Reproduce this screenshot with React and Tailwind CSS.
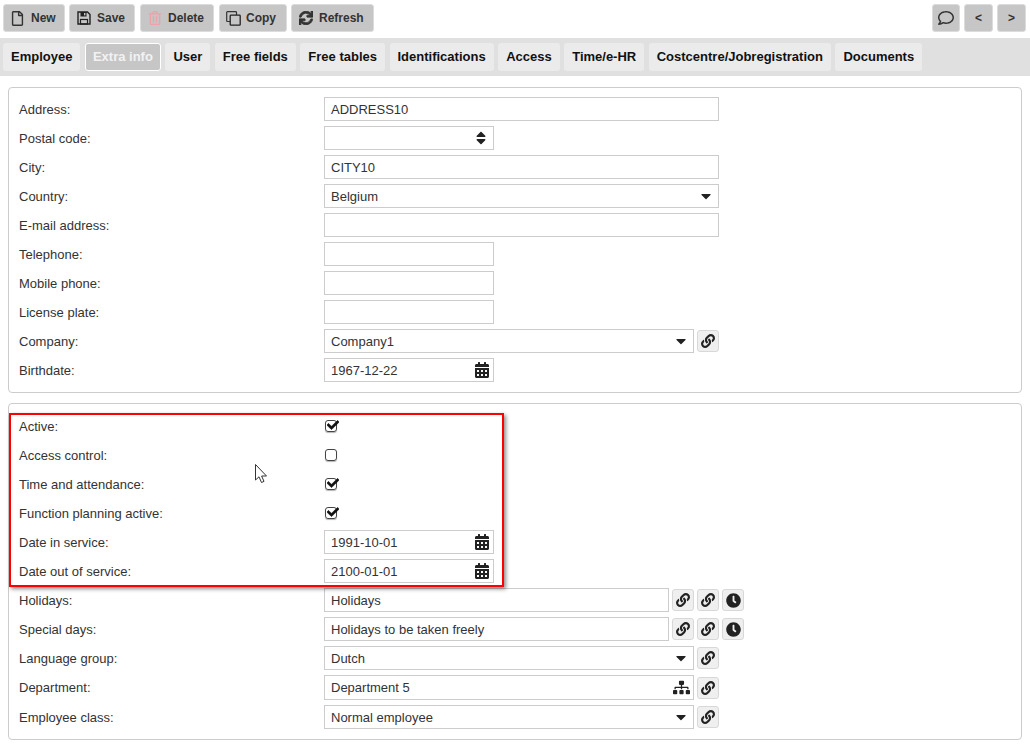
import React from 'react'
import { FaRegFile, FaRegTrashAlt, FaSync, FaRegComment, FaLink, FaClock, FaSitemap, FaCalendarAlt, FaSort, FaCaretDown, FaCheck } from 'react-icons/fa'

const toolbarButton = 'h-7 flex items-center rounded-[3px] border border-[#dcdcdc] bg-[#c6c6c6] text-xs font-bold text-[#333]'
const tabs = ['Employee', 'Extra info', 'User', 'Free fields', 'Free tables', 'Identifications', 'Access', 'Time/e-HR', 'Costcentre/Jobregistration', 'Documents']

const SaveIcon = () => (
  <svg width="14" height="14" viewBox="0 0 14 14" className="shrink-0">
    <path d="M1 1 H10.5 L13 3.5 V13 H1 Z" fill="none" stroke="#222" strokeWidth="1.4" />
    <rect x="3.5" y="1" width="6" height="4.5" fill="#222" />
    <rect x="7" y="2" width="1.4" height="2.4" fill="#c6c6c6" />
    <rect x="3.5" y="8.5" width="7" height="4.5" fill="none" stroke="#222" strokeWidth="1.2" />
  </svg>
)

const CopyIcon = () => (
  <svg width="15" height="15" viewBox="0 0 15 15" className="shrink-0">
    <path d="M4 10.5 H1.5 Q0.7 10.5 0.7 9.7 V1.5 Q0.7 0.7 1.5 0.7 H9.7 Q10.5 0.7 10.5 1.5 V4" fill="none" stroke="#333" strokeWidth="1.2" />
    <rect x="4.2" y="4.2" width="10" height="10" rx="0.8" fill="none" stroke="#222" strokeWidth="1.3" />
  </svg>
)

const Row = ({ label, tall, children }) => (
  <div className={`flex items-center ${tall ? 'h-[25px]' : 'h-6'}`}>
    <label className="w-[305px] shrink-0 text-[#333]">{label}</label>
    {children}
  </div>
)

const Field = ({ width, value, icon, tall }) => (
  <div className={`${width} ${tall ? 'h-[25px]' : 'h-6'} flex items-center justify-between border border-[#ccc] bg-white pl-[6px] pr-[3px] text-[#333]`}>
    <span>{value}</span>
    {icon}
  </div>
)

const IconButton = ({ children }) => (
  <button className="ml-[3px] w-[22px] h-[22px] flex items-center justify-center rounded-[3px] border border-[#d8d8d8] bg-[#efefef] text-[#222] text-[14px]">
    {children}
  </button>
)

const Caret = () => <FaCaretDown className="text-[#222] text-[16px] mr-[1px]" />
const Calendar = () => <FaCalendarAlt className="text-[#222] text-[16px]" />
const LinkButton = () => <IconButton><FaLink /></IconButton>
const ClockButton = () => <IconButton><FaClock className="text-[15px]" /></IconButton>

const Checkbox = ({ checked }) => (
  <div className="relative ml-[1px] w-[12px] h-[12px] rounded-[3px] border border-[#444] shadow-[0_1px_1px_rgba(0,0,0,0.3)]">
    {checked && <FaCheck className="absolute left-[1px] top-[-2px] text-[#111] text-[12px] stroke-[20px]" />}
  </div>
)

const App = () => (
  <div className="relative w-[1030px] h-[752px] overflow-hidden bg-white font-['Liberation_Sans',Arial,sans-serif] text-[13px] leading-none">
    {/* Toolbar */}
    <div className="h-[38px] flex items-start pt-1 pl-[3px] pr-1">
      <button className={`${toolbarButton} w-[62px] pl-[6px] mr-[4px] gap-[6px]`}><FaRegFile className="text-[15px]" />New</button>
      <button className={`${toolbarButton} w-[66px] pl-[7px] mr-[5px] gap-[6px]`}><SaveIcon />Save</button>
      <button className={`${toolbarButton} w-[74px] pl-[7px] mr-[5px] gap-[6px]`}><FaRegTrashAlt className="text-[14px] text-[#f0a0a8]" />Delete</button>
      <button className={`${toolbarButton} w-[68px] pl-[6px] mr-[4px] gap-[5px]`}><CopyIcon />Copy</button>
      <button className={`${toolbarButton} w-[83px] pl-[7px] gap-[6px]`}><FaSync className="text-[14px] stroke-[30px]" />Refresh</button>
      <div className="ml-auto flex gap-[4px]">
        <button className={`${toolbarButton} w-[28px] justify-center`}><FaRegComment className="text-[16px]" /></button>
        <button className={`${toolbarButton} w-[29px] justify-center`}>&lt;</button>
        <button className={`${toolbarButton} w-[29px] justify-center`}>&gt;</button>
      </div>
    </div>

    {/* Tabs */}
    <div className="h-[38px] bg-[#e0e0e0] flex items-center gap-[4.5px] pl-[3px]">
      {tabs.map((tab) => (
        tab === 'Extra info'
          ? <div key={tab} className="h-7 px-[7px] pb-[1px] flex items-center rounded-[3px] border border-white bg-[#c6c6c6] font-bold text-[#f2f2f2]">{tab}</div>
          : <div key={tab} className="h-7 px-2 pb-[1px] flex items-center rounded-[3px] bg-[#ebebeb] font-bold text-[#111]">{tab}</div>
      ))}
    </div>

    {/* Address panel */}
    <div className="mx-2 mt-[11px] h-[306px] rounded-[4px] border border-[#ccc] px-[10px] pt-[9px] flex flex-col gap-[5px]">
      <Row label="Address:"><Field width="w-[395px]" value="ADDRESS10" /></Row>
      <Row label="Postal code:"><Field width="w-[170px]" icon={<FaSort className="text-[#222] text-[16px] mr-[1px]" />} /></Row>
      <Row label="City:"><Field width="w-[395px]" value="CITY10" /></Row>
      <Row label="Country:"><Field width="w-[395px]" value="Belgium" icon={<Caret />} /></Row>
      <Row label="E-mail address:"><Field width="w-[395px]" /></Row>
      <Row label="Telephone:"><Field width="w-[170px]" /></Row>
      <Row label="Mobile phone:"><Field width="w-[170px]" /></Row>
      <Row label="License plate:"><Field width="w-[170px]" /></Row>
      <Row label="Company:"><Field width="w-[370px]" value="Company1" icon={<Caret />} /><LinkButton /></Row>
      <Row label="Birthdate:"><Field width="w-[170px]" value="1967-12-22" icon={<Calendar />} /></Row>
    </div>

    {/* Status panel */}
    <div className="mx-2 mt-[10px] h-[337px] rounded-[4px] border border-[#ccc] px-[10px] pt-[10px] flex flex-col gap-[5px]">
      <Row label="Active:"><Checkbox checked /></Row>
      <Row label="Access control:"><Checkbox /></Row>
      <Row label="Time and attendance:"><Checkbox checked /></Row>
      <Row label="Function planning active:"><Checkbox checked /></Row>
      <Row label="Date in service:"><Field width="w-[170px]" value="1991-10-01" icon={<Calendar />} /></Row>
      <Row label="Date out of service:"><Field width="w-[170px]" value="2100-01-01" icon={<Calendar />} /></Row>
      <Row label="Holidays:"><Field width="w-[345px]" value="Holidays" /><LinkButton /><LinkButton /><ClockButton /></Row>
      <Row label="Special days:"><Field width="w-[345px]" value="Holidays to be taken freely" /><LinkButton /><LinkButton /><ClockButton /></Row>
      <Row label="Language group:"><Field width="w-[370px]" value="Dutch" icon={<Caret />} /><LinkButton /></Row>
      <Row label="Department:" tall><Field tall width="w-[370px]" value="Department 5" icon={<FaSitemap className="text-[#222] text-[17px]" />} /><LinkButton /></Row>
      <Row label="Employee class:"><Field width="w-[370px]" value="Normal employee" icon={<Caret />} /><LinkButton /></Row>
    </div>

    {/* Red annotation box */}
    <div className="absolute left-[9px] top-[413px] w-[495px] h-[174px] border-2 border-[#f00] shadow-[2px_2px_4px_rgba(0,0,0,0.45)]" />

    {/* Mouse cursor */}
    <svg className="absolute left-[255px] top-[464px]" width="13" height="20" viewBox="0 0 13 20">
      <path d="M0.5 0.5 L0.5 16 L4 12.8 L6.5 18.5 L9 17.4 L6.6 12 L11.5 12 Z" fill="#fff" stroke="#333" strokeWidth="1" />
    </svg>
  </div>
)

export default App
